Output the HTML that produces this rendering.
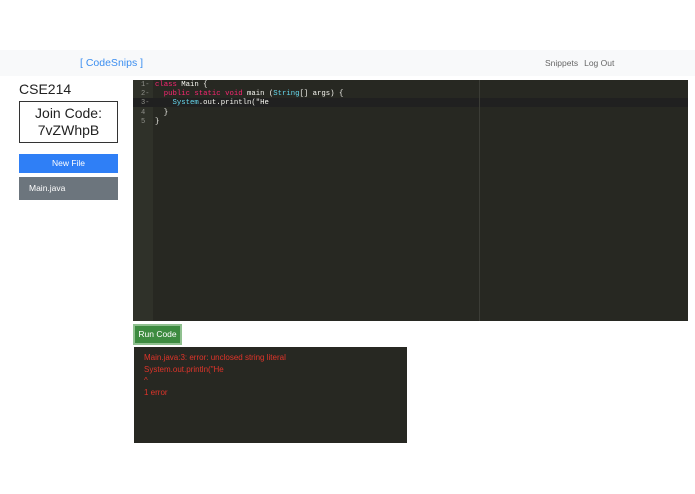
<!DOCTYPE html>
<html><head><meta charset="utf-8"><style>
*{margin:0;padding:0;box-sizing:border-box}
body{width:695px;height:494px;background:#fff;font-family:"Liberation Sans",sans-serif;position:relative;overflow:hidden}
.nav{position:absolute;left:0;top:50px;width:695px;height:26px;background:#f8f9fa}
.brand{position:absolute;left:80px;top:7px;font-size:10.5px;color:#3b8ef0}
.links{position:absolute;left:545px;top:8px;font-size:8.5px;color:#666}
.links span{margin-right:6px}
.title{position:absolute;left:19px;top:81px;font-size:14px;color:#222}
.join{position:absolute;left:19px;top:101px;width:99px;height:42px;border:1.5px solid #333;text-align:center;font-size:14px;line-height:17px;padding-top:3px;color:#222}
.nf{position:absolute;left:19px;top:154px;width:99px;height:19px;background:#2f7ff6;color:#fff;font-size:8.5px;text-align:center;line-height:19px}
.mj{position:absolute;left:19px;top:177px;width:99px;height:23px;background:#6c757d;color:#fff;font-size:8.5px;line-height:23px;padding-left:10px}
.ed{position:absolute;left:133px;top:80px;width:555px;height:241px;background:#272822}
.gut{position:absolute;left:0;top:0;width:20px;height:241px;background:#2f3129}
.pm{position:absolute;left:346px;top:0;width:1px;height:241px;background:#3b3c36}
.act{position:absolute;left:0;top:18px;width:555px;height:9px;background:#202020}
.code{position:absolute;left:0;top:1px;font-family:"Liberation Mono",monospace;font-size:7.3px;line-height:9.2px;color:#f8f8f2;white-space:pre}
.ln{position:absolute;left:8px;top:1px;color:#8f908a;font-family:"Liberation Mono",monospace;font-size:7px;line-height:9.2px;white-space:pre}
.k{color:#f92672}.t{color:#66d9ef}
.run{position:absolute;left:133px;top:324px;width:49px;height:21px;background:#3d8b40;border:2px solid #8fc08f;color:#fff;font-size:8.5px;text-align:center;line-height:17px}
.out{position:absolute;left:134px;top:347px;width:273px;height:96px;background:#272822;color:#e0342a;font-size:8px;line-height:11.7px;padding:5px 10px}
</style></head><body>
<div class="nav"><div class="brand">[ CodeSnips ]</div><div class="links"><span>Snippets</span>Log Out</div></div>
<div class="title">CSE214</div>
<div class="join">Join Code:<br>7vZWhpB</div>
<div class="nf">New File</div>
<div class="mj">Main.java</div>
<div class="ed"><div class="gut"></div><div class="act"></div><div class="pm"></div>
<div class="ln">1-
2-
3-
4
5</div>
<div class="code" style="left:22px"><span class="k">class</span> Main {
  <span class="k">public static void</span> main (<span class="t">String</span>[] args) {
    <span class="t">System</span>.out.println("He
  }
}</div></div>
<div class="run">Run Code</div>
<div class="out">Main.java:3: error: unclosed string literal<br>System.out.println("He<br>^<br>1 error</div>
</body></html>
